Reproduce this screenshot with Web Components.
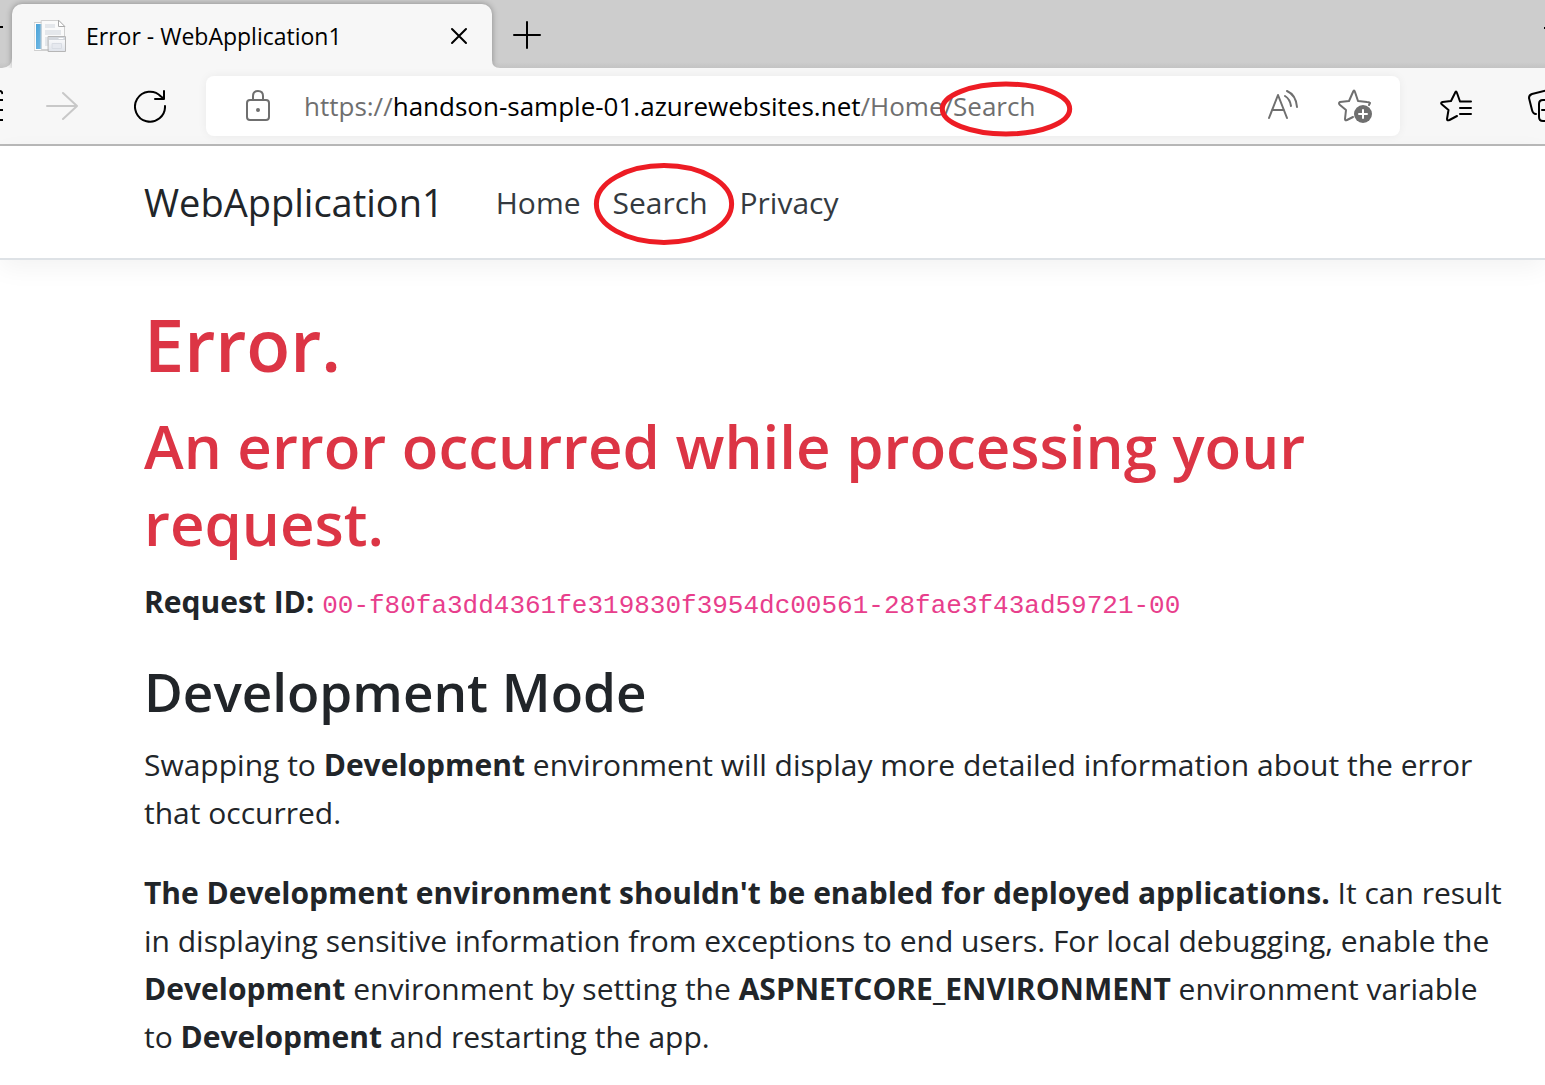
<!DOCTYPE html>
<html lang="en">
<head>
<meta charset="utf-8">
<title>Error - WebApplication1</title>
<style>
html { background: #fff; }
body { margin: 0; font-family: "Open Sans", "Noto Sans", sans-serif; color: #212529; overflow-x: hidden; }
</style>
</head>
<body>
<browser-window>
  <tab-strip slot="tabs">
    <browser-tab>Error - WebApplication1</browser-tab>
  </tab-strip>
  <browser-toolbar slot="toolbar">
    <address-bar host="handson-sample-01.azurewebsites.net"></address-bar>
  </browser-toolbar>
  <site-nav brand="WebApplication1"></site-nav>
  <error-page request="00-f80fa3dd4361fe319830f3954dc00561-28fae3f43ad59721-00"></error-page>
</browser-window>
<script>
const define = (name, html) => customElements.define(name, class extends HTMLElement {
  constructor() {
    super();
    this.attachShadow({ mode: "open" }).innerHTML = html;
  }
  connectedCallback() {
    for (const node of this.shadowRoot.querySelectorAll("[data-from]"))
      node.textContent = this.getAttribute(node.dataset.from);
  }
});

const base = `
  :host, * { box-sizing: border-box; }
  svg { display: block; fill: none; stroke: currentColor; stroke-width: 2; stroke-linecap: round; stroke-linejoin: round; flex: none; }
  button { all: unset; display: block; flex: none; cursor: pointer; }
  a { color: inherit; text-decoration: none; }`;

define("ring-mark", `<style>
  :host { position: absolute; display: block; pointer-events: none; }
  svg { display: block; width: 100%; height: 100%; overflow: visible; }
  ellipse { fill: none; stroke: #ed1c24; stroke-width: 5; }
</style><svg aria-hidden="true"><ellipse cx="50%" cy="50%" rx="49%" ry="48%"/></svg>`);

define("browser-window", `<style>:host { display: block; }</style>
<slot name="tabs"></slot><slot name="toolbar"></slot><slot></slot>`);

define("tab-strip", `<style>${base}
  :host { display: flex; align-items: flex-end; height: 68px; background: linear-gradient(#cdcdcd 62px, #c3c3c3); overflow: hidden; color: #000; }
  .prev { align-self: flex-start; width: 12px; height: 68px; }
  .new { padding: 17px 20px 17px 21px; }
  .end { margin-left: auto; align-self: flex-start; }
</style>
<svg class="prev" viewBox="0 0 12 68" aria-hidden="true"><path d="M0 27H3" stroke-linecap="butt"/><path d="M2 68Q12 67 12 58V68Z" fill="#f7f7f7" stroke="none"/></svg>
<slot></slot>
<button class="new" aria-label="New tab"><svg width="28" height="30" viewBox="0 0 28 30"><path d="M1 14H27M14 1V27"/></svg></button>
<svg class="end" width="2" height="40" viewBox="0 0 2 40" aria-hidden="true"><path d="M1 28H2" stroke-linecap="butt"/></svg>`);

define("browser-tab", `<style>${base}
  :host { display: flex; align-items: center; width: 480px; height: 64px; padding: 0 24px 0 22px; position: relative; border-radius: 10px 10px 0 0; background: #f7f7f7; box-shadow: 0 0 6px #0005; color: #000; font-size: 23px; }
  .title { flex: 1; margin-left: 20px; white-space: nowrap; }
  .foot { position: absolute; left: 100%; bottom: 0; }
</style>
<svg width="32" height="32" viewBox="0 0 32 32" stroke-linejoin="miter" aria-hidden="true">
  <defs><linearGradient id="b" x2="1" y2="1"><stop stop-color="#4aa3d8"/><stop offset="1" stop-color="#79bce6"/></linearGradient>
  <linearGradient id="g" x2="0" y2="1"><stop stop-color="#fff"/><stop offset="1" stop-color="#dfe3ea"/></linearGradient></defs>
  <g stroke-width="1"><path d="M.5 2.500H18V30.500H.5Z" fill="#fff" stroke="#cfcfcf"/><path d="M2 4H8V29H2Z" fill="url(#b)" stroke="none"/>
  <path d="M7.500 .5H24.500L30.500 6.500V29.500H7.500Z" fill="#fafafa" stroke="#d0d0d0"/><path d="M24.500 .5V6.500H30.500Z" fill="#fff" stroke="#aaa"/>
  <path d="M11 4H21V8H11ZM11 10H27V15H11ZM11 17H15V26H11Z" fill="#e4e7eb" stroke="none"/>
  <path d="M14.500 16.500H31.500V31.500H14.500Z" fill="url(#g)" stroke="#b6b6b6"/><path d="M15 17H31V20H15Z" fill="#d3d7dd" stroke="none"/><path d="M25 18.500H29" stroke="#fff"/>
  <path d="M18.500 23.500H27.500V28.500H18.500Z" fill="#e6e9ef" stroke="#d8dce3"/></g>
</svg>
<span class="title"><slot></slot></span>
<button aria-label="Close tab"><svg width="18" height="18" viewBox="0 0 18 18"><path d="M2 2L16 16M16 2L2 16"/></svg></button>
<svg class="foot" width="8" height="8" viewBox="0 0 8 8" aria-hidden="true"><path d="M0 0Q0 8 8 8H0Z" fill="#f7f7f7" stroke="none"/></svg>`);

define("browser-toolbar", `<style>${base}
  :host { display: flex; align-items: center; height: 78px; border-bottom: 2px solid #b9b9b9; background: #f7f7f7; color: #000; overflow: hidden; }
  .forward { margin: 0 56px 0 43px; color: #c8c8c8; }
  .reload { margin-right: 40px; }
  .favs { margin: 0 56px 0 40px; }
  .more { width: 17px; overflow: hidden; }
</style>
<svg width="3" height="40" viewBox="0 0 3 40" aria-hidden="true"><path d="M0 5Q2 5 2.500 8M0 14H3M0 24H3M0 34H3" stroke-linecap="butt"/></svg>
<button class="forward" aria-label="Forward"><svg width="32" height="32" viewBox="0 0 32 32"><path d="M1 16H31M17 3L31 16L17 29"/></svg></button>
<button class="reload" aria-label="Refresh"><svg width="32" height="34" viewBox="0 0 32 34"><path d="M31 17A15 15 0 1 1 27 7.500L29 9M30 2V10H21"/></svg></button>
<slot></slot>
<button class="favs" aria-label="Favorites"><svg width="32" height="34" viewBox="0 0 32 34"><path d="M20 12.500H31M20 19H31M20 25H31M20 12.500L17 4Q16 1 15 4L11 12L2.500 13Q0 14 2 15.500L8.500 21L7 30Q7 32 9.500 31L17 27"/></svg></button>
<button class="more" aria-label="Collections"><svg width="36" height="34" viewBox="0 0 36 34"><path d="M8 25Q5 25 4 21L1 9Q1 6 4 5L20 1Q24 1 25 5M32 11H15Q11 11 11 15V28Q11 32 15 32H30Q34 32 34 28V15Q34 11 30 11M14 21H30M22 14V28"/></svg></button>`);

define("address-bar", `<style>${base}
  :host { display: flex; align-items: center; flex: 1; min-width: 0; height: 60px; padding: 0 28px 0 40px; background: #fff; border-radius: 8px; box-shadow: 0 0 10px #0000000e; color: #6f6f6f; font-size: 26px; }
  .url { flex: 1; margin-left: 34px; white-space: nowrap; outline: none; }
  .host { color: #000; }
  .last { position: relative; }
  ring-mark { left: -12px; top: -5px; width: 130px; height: 52px; }
  .read { margin-right: 39px; }
</style>
<button aria-label="Site information"><svg width="24" height="32" viewBox="0 0 24 32"><rect x="1" y="10" width="22" height="20" rx="3"/><path d="M7 10V6Q7 1 12 1T17 6V10"/><circle cx="12" cy="20" r="1"/></svg></button>
<div class="url" role="textbox" aria-label="Address" contenteditable="true" spellcheck="false">https://<span class="host" data-from="host"></span>/Home/<span class="last">Search<ring-mark contenteditable="false"></ring-mark></span></div>
<button class="read" aria-label="Read aloud"><svg width="32" height="34" viewBox="0 0 32 34"><path d="M2 29L11 6L20 29M5 21H17M18 7Q23 10 24 17M20 2Q29 6 30 18"/></svg></button>
<button aria-label="Add to favorites"><svg width="34" height="34" viewBox="0 0 34 34"><path d="M31 16L32 14Q31 13 29 13L20 12L17 3Q16 0 15 3L11 12L2 13Q0 14 2 16L8 21L7 30Q7 32 9 31L15 28"/><circle cx="25" cy="25" r="9" fill="currentColor" stroke="none"/><path d="M25 21V29M21 25H29" stroke="#fff"/></svg></button>`);

define("site-nav", `<style>${base}
  :host { display: block; border-bottom: 2px solid #dee2e6; box-shadow: 0 8px 24px #0000000d; color: #343a40; }
  nav { display: flex; align-items: center; height: 112px; padding-left: 144px; font-size: 30px; }
  .brand { color: #212529; font-size: 38px; margin-right: 52px; }
  ul { display: flex; gap: 32px; margin: 0; padding: 0; list-style: none; }
  li { position: relative; }
  ring-mark { left: -18px; top: -18px; width: 138px; height: 80px; }
</style>
<nav aria-label="Main"><a class="brand" href="#" data-from="brand"></a>
<ul><li><a href="#home">Home</a></li><li><a href="#search">Search</a><ring-mark></ring-mark></li><li><a href="#privacy">Privacy</a></li></ul></nav>`);

define("error-page", `<style>${base}
  :host { display: block; padding: 36px 32px 24px 144px; font-size: 30px; line-height: 48px; }
  h1, h2, h3 { margin: 0 0 16px; font-weight: 600; }
  h1 { font-size: 72px; line-height: 96px; }
  h2 { font-size: 60px; line-height: 77px; }
  h3 { font-size: 53px; line-height: 67px; }
  .danger { color: #dc3545; }
  p { margin: 0 0 32px; }
  strong { font-weight: 700; }
  code { font-family: "Liberation Mono", monospace; font-size: 26px; line-height: 1; color: #e83e8c; }
</style>
<main>
<h1 class="danger">Error.</h1>
<h2 class="danger">An error occurred while processing your request.</h2>
<p><strong>Request ID:</strong> <code data-from="request"></code></p>
<h3>Development Mode</h3>
<p>Swapping to <strong>Development</strong> environment will display more detailed information about the error that occurred.</p>
<p><strong>The Development environment shouldn't be enabled for deployed applications.</strong> It can result in displaying sensitive information from exceptions to end users. For local debugging, enable the <strong>Development</strong> environment by setting the <strong>ASPNETCORE_ENVIRONMENT</strong> environment variable to <strong>Development</strong> and restarting the app.</p>
</main>`);
</script>
</body>
</html>
